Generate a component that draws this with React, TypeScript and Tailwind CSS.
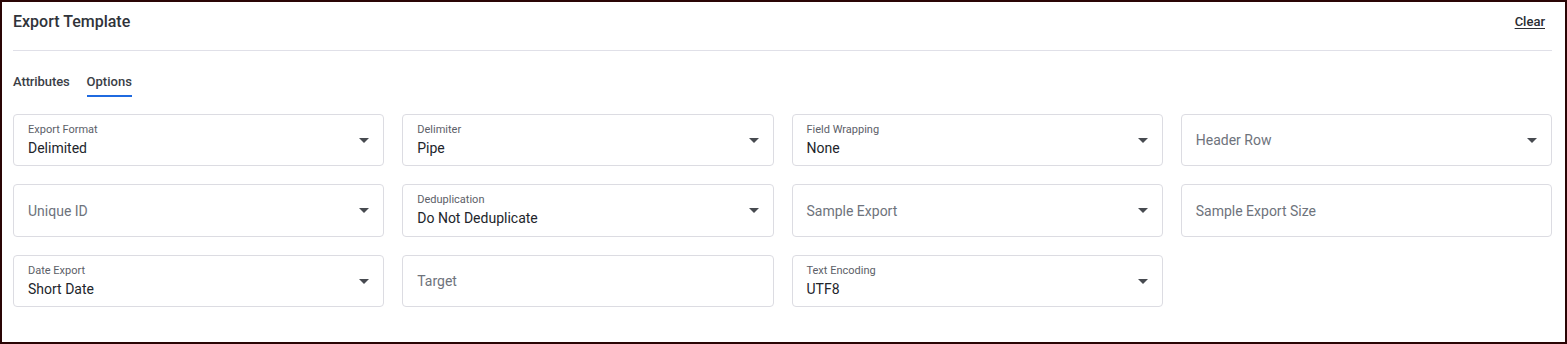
import React from 'react'

type Field = {
  label: string
  value?: string
  select?: boolean
}

const fields: (Field | null)[] = [
  { label: 'Export Format', value: 'Delimited', select: true },
  { label: 'Delimiter', value: 'Pipe', select: true },
  { label: 'Field Wrapping', value: 'None', select: true },
  { label: 'Header Row', select: true },
  { label: 'Unique ID', select: true },
  { label: 'Deduplication', value: 'Do Not Deduplicate', select: true },
  { label: 'Sample Export', select: true },
  { label: 'Sample Export Size' },
  { label: 'Date Export', value: 'Short Date', select: true },
  { label: 'Target' },
  { label: 'Text Encoding', value: 'UTF8', select: true },
  null,
]

function Caret() {
  return (
    <svg width="10" height="5" viewBox="0 0 10 5" className="shrink-0">
      <path d="M0 0h10L5 5z" fill="#474a50" />
    </svg>
  )
}

function FieldBox({ field, tall }: { field: Field; tall?: boolean }) {
  return (
    <div
      className={`${tall ? 'h-[53px]' : 'h-[52px]'} rounded-[4px] border border-[#dcdce2] bg-white pl-[14px] pr-[14px] flex items-center`}
    >
      <div className="flex-1 min-w-0">
        {field.value ? (
          <div className="flex flex-col">
            <span className="text-[11px] leading-[14px] text-[#5c6068]">{field.label}</span>
            <span className="mt-[1px] text-[14px] leading-[20px] text-[#22252b]">{field.value}</span>
          </div>
        ) : (
          <span className="text-[14px] leading-[20px] text-[#6e737c]">{field.label}</span>
        )}
      </div>
      {field.select ? <Caret /> : null}
    </div>
  )
}

export default function App() {
  return (
    <div
      className="w-[1567px] h-[344px] border-2 border-[#2a0505] bg-white pl-[11px] pr-[13px]"
      style={{ fontFamily: 'Roboto, "Liberation Sans", sans-serif' }}
    >
      <div className="flex items-center justify-between pt-[10px] pb-[18px] border-b border-[#e0e0e8]">
        <h1 className="text-[16px] leading-[20px] font-medium text-[#30333a]">Export Template</h1>
        <button className="mr-[7px] text-[13px] leading-[20px] font-medium text-[#2a2d33] underline underline-offset-2">
          Clear
        </button>
      </div>

      <div className="flex gap-[17px] mt-[21px]">
        <div className="text-[13px] leading-[20px] font-medium text-[#3a3e46] pb-[6px] tracking-[-0.1px]">Attributes</div>
        <div className="flex flex-col">
          <div className="text-[13px] leading-[20px] font-medium text-[#3a3e46] pb-[3px]">Options</div>
          <div className="h-[2px] bg-[#1f6ae0]" />
        </div>
      </div>

      <div className="grid grid-cols-4 gap-x-[18px] gap-y-[18px] mt-[16px]">
        {fields.map((f, i) =>
          f ? <FieldBox key={i} field={f} tall={i >= 4 && i < 8} /> : <div key={i} />
        )}
      </div>
    </div>
  )
}
